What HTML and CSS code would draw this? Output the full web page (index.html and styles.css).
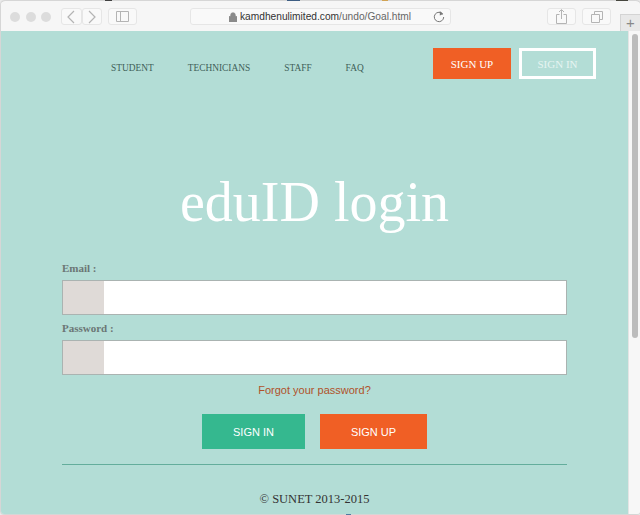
FILE: index.html
```html
<!DOCTYPE html>
<html>
<head>
    <title>eduID login</title>
    <link rel="stylesheet" href="styles.css">
</head>
<body>
    <div class="window">
        <div class="toolbar">
            <div class="lights">
                <span class="light"></span>
                <span class="light"></span>
                <span class="light"></span>
            </div>
            <div class="tool-pair">
                <span class="tool tool-half">
                    <svg width="8" height="14" viewBox="0 0 8 14"><path d="M7 1L1 7l6 6" fill="none" stroke="#b4b4b4" stroke-width="1.2"/></svg>
                </span>
                <span class="tool tool-half">
                    <svg width="8" height="14" viewBox="0 0 8 14"><path d="M1 1l6 6-6 6" fill="none" stroke="#b4b4b4" stroke-width="1.2"/></svg>
                </span>
            </div>
            <span class="tool tool-sidebar">
                <svg width="13" height="11" viewBox="0 0 13 11"><path d="M.5.5h12v10H.5zM4.5.5v10" fill="none" stroke="#b4b4b4"/></svg>
            </span>
            <div class="address">
                <svg class="lock" width="8" height="10" viewBox="0 0 8 10"><path d="M0 4.500h8V10H0zM1.700 4.500V3a2.300 2.300 0 0 1 4.600 0v1.500" fill="#8a8a8a" stroke="#8a8a8a" stroke-width=".7"/></svg>
                <span class="url"><span class="url-host">kamdhenulimited.com</span>/undo/Goal.html</span>
                <svg class="reload" width="12" height="12" viewBox="0 0 12 12"><path d="M9.800 3.200A4.700 4.700 0 1 0 10.700 6" fill="none" stroke="#777" stroke-width="1"/><path d="M6.800 0l3.400 3-3.400 1.600z" fill="#777"/></svg>
            </div>
            <span class="tool tool-action">
                <svg width="11" height="15" viewBox="0 0 11 15"><path d="M3.500 5.500H.5v9h10v-9h-3M5.500 10V1M3 3l2.500-2.500L8 3" fill="none" stroke="#b4b4b4"/></svg>
            </span>
            <span class="tool tool-action">
                <svg width="12" height="12" viewBox="0 0 12 12"><path d="M.5 3.500h8v8h-8zM3.500 3.500v-3h8v8h-3" fill="none" stroke="#b4b4b4"/></svg>
            </span>
            <span class="new-tab">+</span>
        </div>

        <div class="viewport">
            <div class="page">
                <div class="nav">
                    <div class="nav-links">
                        <a class="nav-link">STUDENT</a>
                        <a class="nav-link">TECHNICIANS</a>
                        <a class="nav-link">STAFF</a>
                        <a class="nav-link">FAQ</a>
                    </div>
                    <a class="nav-btn nav-btn-up">SIGN UP</a>
                    <a class="nav-btn nav-btn-in">SIGN IN</a>
                </div>

                <h1 class="title">eduID login</h1>

                <form class="login">
                    <label class="field-label">Email :</label>
                    <div class="field">
                        <span class="field-addon"></span>
                    </div>
                    <label class="field-label field-label-second">Password :</label>
                    <div class="field">
                        <span class="field-addon"></span>
                    </div>
                    <a class="forgot">Forgot your password?</a>
                    <div class="buttons">
                        <a class="btn btn-in">SIGN IN</a>
                        <a class="btn btn-up">SIGN UP</a>
                    </div>
                </form>

                <div class="rule"></div>
                <p class="copyright">© SUNET 2013-2015</p>
            </div>
            <div class="scrollbar">
                <span class="scroll-thumb"></span>
            </div>
        </div>
    </div>
</body>
</html>
```

FILE: styles.css
```css
html, body {
    margin: 0;
    padding: 0;
}

body {
    width: 640px;
    height: 515px;
    overflow: hidden;
    background-color: #ececec;
    background-image:
        linear-gradient(#222, #222),
        linear-gradient(#1f4a7c, #1f4a7c),
        linear-gradient(#e6a73c, #e6a73c),
        linear-gradient(#2a2a20, #2a2a20),
        linear-gradient(#3a6ea5, #3a6ea5);
    background-repeat: no-repeat;
    background-size: 7px 2px, 13px 2px, 6px 2px, 12px 2px, 5px 2px;
    background-position: 105px 0, 287px 0, 382px 0, 616px 0, 346px 513px;
    font-family: "Liberation Serif", serif;
}

.window {
    display: flex;
    flex-direction: column;
    height: 513px;
    margin-left: 1px;
    margin-top: 1px;
    padding-top: 1px;
    box-sizing: border-box;
    background: #f6f6f6;
    border-radius: 4px 4px 3px 3px;
    box-shadow: 0 0 2px #999;
    overflow: hidden;
}

.toolbar {
    display: flex;
    align-items: center;
    height: 29px;
    flex-shrink: 0;
    padding-left: 9px;
    background: #f6f6f6;
    position: relative;
}

.lights {
    display: flex;
    gap: 5.5px;
    margin-right: 10px;
}

.light {
    width: 10px;
    height: 10px;
    border-radius: 50%;
    background: #dcdcdc;
}

.tool-pair {
    display: flex;
    margin-right: 6px;
}

.tool {
    display: flex;
    align-items: center;
    justify-content: center;
    height: 15px;
    border: 1px solid #e6e6e6;
    border-radius: 3px;
    background: #f9f9f9;
}

.tool-half {
    width: 18.5px;
}

.tool-sidebar {
    width: 27px;
    margin-right: 53px;
}

.address {
    display: flex;
    align-items: center;
    width: 221px;
    height: 15px;
    padding-left: 38px;
    margin-right: 96px;
    border: 1px solid #e6e6e6;
    border-radius: 3px;
    background: #f9f9f9;
    position: relative;
}

.lock {
    margin-right: 3px;
}

.url {
    font-family: "Liberation Sans", sans-serif;
    font-size: 10.2px;
    color: #666;
    white-space: nowrap;
}

.url-host {
    color: #333;
}

.reload {
    position: absolute;
    right: 5px;
    top: 2px;
}

.tool-action {
    width: 27px;
    margin-right: 6px;
}

.new-tab {
    position: absolute;
    right: 0;
    bottom: 0;
    width: 19px;
    height: 16px;
    border-left: 1px solid #d4d4d4;
    border-top: 1px solid #d4d4d4;
    background: #e8e8e8;
    color: #888;
    font-family: "Liberation Sans", sans-serif;
    font-size: 15px;
    line-height: 16px;
    text-align: center;
}

.viewport {
    display: flex;
    flex: 1;
    min-height: 0;
}

.page {
    width: 627px;
    flex-shrink: 0;
    background: #b3ddd6;
}

.nav {
    display: flex;
    align-items: flex-start;
    padding-top: 17px;
    height: 48px;
}

.nav-links {
    display: flex;
    gap: 34px;
    margin-left: 110px;
    width: 322px;
    padding-top: 13px;
    flex-shrink: 0;
}

.nav-link {
    font-size: 9.4px;
    line-height: 14px;
    color: #3f5f58;
}

.nav-btn {
    display: flex;
    align-items: center;
    justify-content: center;
    box-sizing: border-box;
    height: 31px;
    font-size: 11px;
    color: #fff;
}

.nav-btn-up {
    width: 78px;
    background: #f05f25;
}

.nav-btn-in {
    width: 77px;
    margin-left: 8px;
    border: 3px solid #fff;
    color: #e6f4f1;
}

.title {
    margin: 0;
    padding-top: 74px;
    text-align: center;
    font-size: 56px;
    line-height: 64px;
    font-weight: normal;
    color: #fff;
}

.login {
    display: flex;
    flex-direction: column;
    margin: 28px 0 0 61px;
    width: 505px;
}

.field-label {
    font-size: 11px;
    font-weight: bold;
    line-height: 13px;
    color: #6b7675;
}

.field-label-second {
    margin-top: 7px;
}

.field {
    display: flex;
    height: 35px;
    margin-top: 5px;
    box-sizing: border-box;
    border: 1px solid #aab3b1;
    background: #fff;
}

.field-addon {
    width: 41px;
    background: #dfdad7;
}

.forgot {
    margin-top: 8px;
    text-align: center;
    font-family: "Liberation Sans", sans-serif;
    font-size: 11px;
    line-height: 14px;
    color: #b0522a;
}

.buttons {
    display: flex;
    gap: 15px;
    margin: 17px 0 0 140px;
}

.btn {
    display: flex;
    align-items: center;
    justify-content: center;
    height: 35px;
    font-family: "Liberation Sans", sans-serif;
    font-size: 11px;
    color: #fff;
}

.btn-in {
    width: 103px;
    background: #35b88f;
}

.btn-up {
    width: 107px;
    background: #f05f25;
}

.rule {
    width: 505px;
    height: 1px;
    margin: 15px 0 0 61px;
    background: #63ad9c;
}

.copyright {
    margin: 27px 0 0;
    text-align: center;
    font-size: 12.500px;
    line-height: 15px;
    color: #333;
}

.scrollbar {
    flex: 1;
    background: #f7f7f7;
    border-left: 1px solid #e4e4e4;
    padding: 3px 2px 0 3px;
}

.scroll-thumb {
    display: block;
    height: 304px;
    border-radius: 4px;
    background: #bcbcbc;
}
```
